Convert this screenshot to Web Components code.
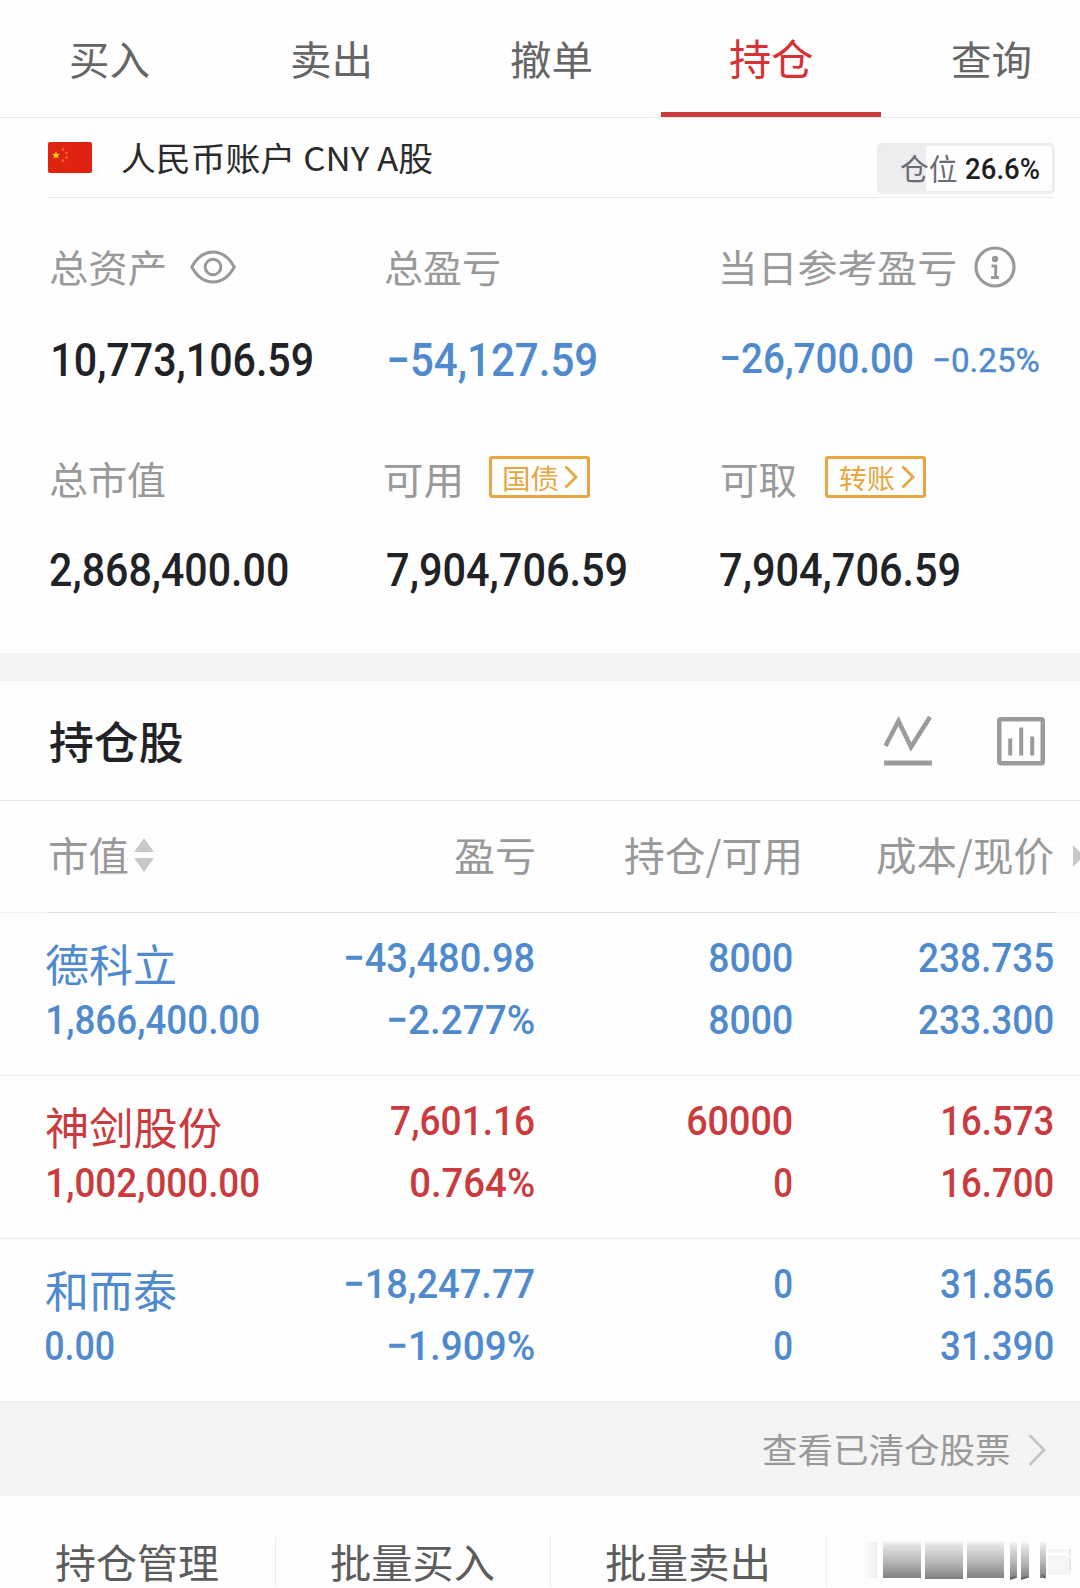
<!DOCTYPE html>
<html lang="zh-CN">
<head>
<meta charset="utf-8">
<title>持仓</title>
<style>
body {
  margin: 0;
  width: 1080px;
  height: 1588px;
  overflow: hidden;
  background: #fefefe;
  color: #212226;
  font-family: "Noto Sans CJK SC", sans-serif;
  --up: #cb3a3d;
  --down: #4f8ace;
  --label: #999;
  --line: #e8e8e8;
}
</style>
</head>
<body>

<trade-tabs items="买入:78,卖出:77,撤单:80,持仓:83,查询:78" active="3"></trade-tabs>
<account-bar></account-bar>
<asset-summary></asset-summary>
<holdings-title><fit-text w="133">持仓股</fit-text></holdings-title>
<holdings-head></holdings-head>
<stock-row trend="down" name="德科立:129" value="1,866,400.00:211" profit="−43,480.98:188" rate="−2.277%:145" held="8000:82" usable="8000:82" cost="238.735:134" price="233.300:134"></stock-row>
<stock-row trend="up" name="神剑股份:175" value="1,002,000.00:211" profit="7,601.16:143" rate="0.764%:123" held="60000:104" usable="0:17" cost="16.573:110" price="16.700:110"></stock-row>
<stock-row trend="down" name="和而泰:130" value="0.00:68" profit="−18,247.77:188" rate="−1.909%:145" held="0:17" usable="0:17" cost="31.856:112" price="31.390:112"></stock-row>
<cleared-link><fit-text w="246">查看已清仓股票</fit-text></cleared-link>
<bottom-bar></bottom-bar>

<script>
const ctx = document.createElement('canvas').getContext('2d');

// "text:width" -> fit-text markup
function fit(pair, attrs = '') {
  const i = pair.lastIndexOf(':');
  return `<fit-text ${attrs} w="${pair.slice(i + 1)}">${pair.slice(0, i)}</fit-text>`;
}

class TradeTabs extends HTMLElement {
  constructor() {
    super();
    this.attachShadow({ mode: 'open' });
  }
  connectedCallback() {
    const active = Number(this.getAttribute('active'));
    this.shadowRoot.innerHTML = `
<style>
:host { display: flex; height: 117px; border-bottom: 1px solid var(--line); overflow: hidden; }
div { flex: none; width: 220.3px; height: 117px; box-sizing: border-box; display: flex; align-items: center; justify-content: center; color: #666; font-size: 40px; padding-top: 3px; border-bottom: 0 solid #cb3a3d; }
div:last-child { width: 198.8px; padding-left: 71px; justify-content: flex-start; }
.on { color: #d63236; font-size: 42.5px; border-bottom-width: 5px; padding-top: 6px; }
</style>` + this.getAttribute('items').split(',').map((t, i) =>
      `<div class="${i === active ? 'on' : ''}">${fit(t)}</div>`).join('');
  }
}
customElements.define('trade-tabs', TradeTabs);

class AccountBar extends HTMLElement {
  constructor() {
    super();
    this.attachShadow({ mode: 'open' }).innerHTML = `
<style>
:host { display: flex; align-items: center; height: 79px; margin: 0 25px 0 48px; border-bottom: 1px solid var(--line); font-size: 33px; color: #2b2b2b; }
svg { width: 44px; height: 31px; margin: -1px 30px 0 0; }
.name { margin-top: 3px; }
.pos { box-sizing: border-box; width: 178px; height: 51px; margin: 22px 0 0 auto; border: 3px solid #ededef; border-radius: 5px; display: flex; align-items: center; padding: 0 13px 0 20px; justify-content: space-between; background: linear-gradient(90deg, #ededef 46px, #fefefe 46px); }
.lb { font-size: 29.5px; color: #6a6c70; margin-top: 2px; }
.pc { font-size: 30px; font-weight: 500; color: #1f1f1f; margin-top: 1px; }
</style>
<svg viewBox="0 0 44 31">
  <rect width="44" height="31" rx="2" fill="#de2410"/>
  <path d="M8 12.2l1.1 2.6 2.8.2-2.1 1.8.7 2.7L8 18l-2.5 1.5.7-2.7L4 15l2.9-.2z" fill="#ffcf10" transform="translate(0 -3)"/>
  <g fill="#f0722c"><circle cx="15" cy="7.500" r="1.300"/><circle cx="18.500" cy="11" r="1.200"/><circle cx="18.500" cy="15.500" r="1.200"/><circle cx="15" cy="18.500" r="1.300"/></g>
</svg>
<fit-text class="name" w="310">人民币账户 CNY A股</fit-text>
<div class="pos"><fit-text class="lb" w="57">仓位</fit-text><fit-text class="pc" num w="73">26.6%</fit-text></div>`;
  }
}
customElements.define('account-bar', AccountBar);

class LinkTag extends HTMLElement {
  constructor() {
    super();
    this.attachShadow({ mode: 'open' }).innerHTML = `
<style>
:host { box-sizing: border-box; width: 101px; height: 42px; margin-top: -5px; border: 3px solid #e7a63f; border-radius: 3px; display: flex; align-items: center; padding-left: 12px; font-size: 27px; color: #e7a63f; }
svg { width: 14px; height: 24px; margin-left: 6px; }
::slotted(*) { margin-top: 4px; }
</style>
<slot></slot>
<svg viewBox="0 0 14 24" fill="none" stroke="currentColor" stroke-width="2.800"><path d="M1.500 1.500L12 12 1.500 22.500"/></svg>`;
  }
}
customElements.define('link-tag', LinkTag);

class AssetSummary extends HTMLElement {
  constructor() {
    super();
    this.attachShadow({ mode: 'open' }).innerHTML = `
<style>
:host { display: grid; box-sizing: border-box; height: 483px; padding: 37px 0 0 50px; border-bottom: 28px solid #f4f4f4; grid-template-columns: 335px 337px 1fr; grid-template-rows: 65px 119px 121px 58px; align-items: center; font-size: 38px; color: var(--label); }
div { display: flex; align-items: center; }
.v { font-size: 46.500px; font-weight: 500; color: #212226; }
.down { color: var(--down); }
.day { font-size: 42.500px; align-items: baseline; margin-top: -2px; }
.day .pct { font-size: 34px; font-weight: 400; margin-left: 22px; -webkit-text-stroke: .4px; }
link-tag { margin-left: 29px; }
svg { flex: none; fill: none; stroke: currentColor; }
.eye { width: 46px; height: 34px; margin: -2px 0 0 25px; }
.info { width: 42px; height: 42px; margin: -2px 0 0 19px; }
</style>
<div><fit-text w="115">总资产</fit-text>
  <svg class="eye" viewBox="0 0 46 34" stroke-width="3"><path d="M1.800 17C7 7.500 14 2 23 2s16 5.500 21.200 15C39 26.500 32 32 23 32S7 26.500 1.800 17z"/><circle cx="23" cy="17" r="7.800"/></svg></div>
<div><fit-text w="114">总盈亏</fit-text></div>
<div><fit-text w="233">当日参考盈亏</fit-text>
  <svg class="info" viewBox="0 0 42 42" stroke-width="3.200"><circle cx="21" cy="21" r="19"/><circle cx="21" cy="13" r="3.200" fill="currentColor" stroke="none"/><path d="M17.500 20h4.200v11M17 31.500h8" stroke-width="3"/></svg></div>
<div class="v"><fit-text num w="259" style="margin-left:3px">10,773,106.59</fit-text></div>
<div class="v down"><fit-text num w="207" style="margin-left:4px">−54,127.59</fit-text></div>
<div class="v down day"><fit-text num w="190">−26,700.00</fit-text><fit-text class="pct" num w="105">−0.25%</fit-text></div>
<div><fit-text w="115">总市值</fit-text></div>
<div><fit-text w="75">可用</fit-text><link-tag><fit-text w="54">国债</fit-text></link-tag></div>
<div><fit-text w="74">可取</fit-text><link-tag><fit-text w="55">转账</fit-text></link-tag></div>
<div class="v"><fit-text num w="238">2,868,400.00</fit-text></div>
<div class="v"><fit-text num w="239" style="margin-left:2px">7,904,706.59</fit-text></div>
<div class="v"><fit-text num w="239" style="margin-left:-2px">7,904,706.59</fit-text></div>`;
  }
}
customElements.define('asset-summary', AssetSummary);

class HoldingsTitle extends HTMLElement {
  constructor() {
    super();
    this.attachShadow({ mode: 'open' }).innerHTML = `
<style>
:host { display: flex; align-items: center; height: 119px; padding: 0 35px 0 50px; border-bottom: 1px solid var(--line); font-size: 44.500px; font-weight: 500; }
svg { width: 48px; height: 50px; fill: none; stroke: #9b9b9b; }
.first { margin: 0 65px 0 auto; }
::slotted(*) { margin-top: 3px; }
</style>
<slot></slot>
<svg class="first" viewBox="0 0 48 50" stroke-width="4.500"><path d="M1.500 30L14.500 5 27 31 46 1"/><path d="M0 47h48" stroke-width="5"/></svg>
<svg viewBox="0 0 48 50"><rect x="2.250" y="3.250" width="43.500" height="44" rx="1.500" stroke-width="4.500"/><path d="M13.200 22.500v17M24.200 11.500v28M35.200 20.500v19" stroke-width="4"/></svg>`;
  }
}
customElements.define('holdings-title', HoldingsTitle);

class HoldingsHead extends HTMLElement {
  constructor() {
    super();
    this.attachShadow({ mode: 'open' }).innerHTML = `
<style>
:host { display: grid; grid-template-columns: 484px 265px 254px 27px; height: 111px; padding-left: 50px; align-items: center; font-size: 40px; color: var(--label); border-bottom: 1px solid; border-image: linear-gradient(90deg, #f3f3f3 48px, #dcdcdc 48px 1055px, #f3f3f3 1055px) 1; }
div { display: flex; justify-content: flex-end; margin-top: -2px; }
.first { justify-content: space-between; align-items: center; }
svg { fill: #c8c8c8; }
.sort { width: 20px; height: 34px; margin: -2px auto 0 6px; }
</style>
<div class="first"><fit-text w="78">市值</fit-text><svg class="sort" viewBox="0 0 20 34"><path d="M10 0l10 14H0zM0 20h20L10 34z"/></svg><fit-text w="79">盈亏</fit-text></div>
<div><fit-text w="174">持仓/可用</fit-text></div>
<div><fit-text w="176">成本/现价</fit-text></div>
<div><svg width="7" height="22" viewBox="0 0 7 22"><path d="M0 0l11 11L0 22z"/></svg></div>`;
  }
}
customElements.define('holdings-head', HoldingsHead);

class StockRow extends HTMLElement {
  constructor() {
    super();
    this.attachShadow({ mode: 'open' });
  }
  connectedCallback() {
    const n = key => fit(this.getAttribute(key), `num class="${key}"`);
    const indent = this.getAttribute('value')[0] === '1' ? 2 : 0;
    this.shadowRoot.innerHTML = `
<style>
:host { display: grid; box-sizing: border-box; height: 163px; padding: 13px 27px 0 46px; grid-template-columns: 220px 268px 258px 1fr; grid-template-rows: 62px 62px; align-items: center; justify-items: end; border-bottom: 1px solid #eee; font-size: 41px; font-weight: 500; color: var(--${this.getAttribute('trend')}); }
.name { justify-self: start; font-size: 44px; font-weight: 400; margin-top: 15px; }
.value { justify-self: start; margin-left: ${indent}px; }
</style>
${fit(this.getAttribute('name'), 'class="name"')}${n('profit')}${n('held')}${n('cost')}
${n('value')}${n('rate')}${n('usable')}${n('price')}`;
  }
}
customElements.define('stock-row', StockRow);

class ClearedLink extends HTMLElement {
  constructor() {
    super();
    this.attachShadow({ mode: 'open' }).innerHTML = `
<style>
:host { display: flex; align-items: center; justify-content: flex-end; height: 94px; padding-right: 34px; background: #f4f4f4; color: var(--label); font-size: 34.500px; }
svg { width: 18px; height: 32px; margin: 2px 0 0 19px; fill: none; stroke: #c6c6c6; stroke-width: 2.800; }
::slotted(*) { margin-top: 3px; }
</style>
<slot></slot><svg viewBox="0 0 18 32"><path d="M1.500 1L16 16 1.500 31"/></svg>`;
  }
}
customElements.define('cleared-link', ClearedLink);

class BottomBar extends HTMLElement {
  constructor() {
    super();
    this.attachShadow({ mode: 'open' }).innerHTML = `
<style>
:host { display: flex; height: 51px; padding-top: 41px; font-size: 40px; color: #5c5c5c; }
div { box-sizing: border-box; width: 275.500px; height: 50px; padding-top: 2px; display: flex; align-items: center; justify-content: center; border-right: 1px solid #ededed; }
div:nth-of-type(3) { padding-right: 3px; }
svg { width: 220px; height: 50px; margin-left: 33px; }
</style>
<div><fit-text w="162">持仓管理</fit-text></div>
<div><fit-text w="163">批量买入</fit-text></div>
<div><fit-text w="161">批量卖出</fit-text></div>
<svg viewBox="0 0 220 50">
  <defs>
    <linearGradient id="g" x2="0" y2="1"><stop stop-color="#fefefe"/><stop offset=".15" stop-color="#e2e2e2"/><stop offset=".6" stop-color="#b4b4b4"/><stop offset="1" stop-color="#808080"/></linearGradient>
    <linearGradient id="f"><stop stop-color="#f0f0f0" stop-opacity="0"/><stop offset="1" stop-color="#eee"/></linearGradient>
    <filter id="b" x="-10%" y="-10%" width="120%" height="120%"><feGaussianBlur stdDeviation=".7"/></filter>
  </defs>
  <g filter="url(#b)" fill="url(#g)">
    <path d="M3 5h14v36H3z" fill="url(#f)"/>
    <path d="M23 3h38v38H23z"/><path d="M65 3h38v39H65z"/><path d="M107 3h37v38h-37z"/>
    <path d="M150 4h7v37h-7z"/><path d="M161 4h8v37h-8z"/><path d="M180 4h6v37h-6z"/>
    <path d="M150 42l6-2M161 42l6-2M182 38l3 3" stroke="#666" stroke-width="2"/>
    <path d="M188 12h23v26h-23z" fill="#f5f5f5"/><path d="M186 17h24" stroke="#fff" stroke-width="3"/><path d="M210 12v6M210 21v12" stroke="#e2e2e2" stroke-width="1.500"/>
  </g>
</svg>`;
  }
}
customElements.define('bottom-bar', BottomBar);

// Text whose ink is stretched to exactly w pixels.
// Defined last, so slotted text already inherits its host's font when measured.
class FitText extends HTMLElement {
  connectedCallback() {
    if (this.shadowRoot) return;
    const num = this.hasAttribute('num');
    this.attachShadow({ mode: 'open' }).innerHTML = `
<style>
:host { display: block; flex: none; line-height: 1; white-space: nowrap; ${num ? 'font-family: Roboto, sans-serif;' : ''} }
span { display: inline-block; transform-origin: 0 50%; }
</style><span><slot></slot></span>`;
    const cs = getComputedStyle(this);
    ctx.font = `${cs.fontWeight} ${cs.fontSize} ${cs.fontFamily}`;
    const m = ctx.measureText(this.textContent);
    const w = Number(this.getAttribute('w'));
    const scale = w / (m.actualBoundingBoxLeft + m.actualBoundingBoxRight);
    const size = parseFloat(cs.fontSize);
    this.style.width = w + 'px';
    this.style.height = size + 'px';
    this.shadowRoot.querySelector('span').style.transform =
      `translate(${m.actualBoundingBoxLeft * scale}px, ${num ? 0.014 * size : -0.056 * size}px) scaleX(${scale})`;
  }
}
customElements.define('fit-text', FitText);
</script>
</body>
</html>
